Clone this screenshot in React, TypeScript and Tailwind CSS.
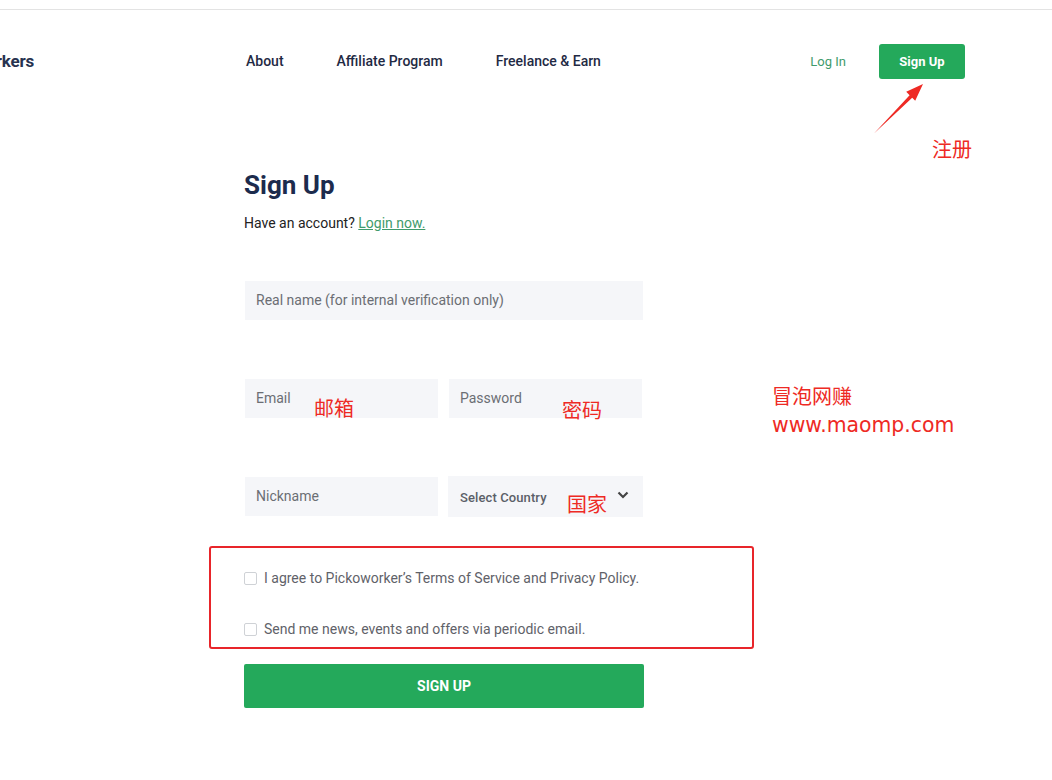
import React from "react";

const cjk = "font-['Noto_Sans_CJK_SC',sans-serif]";

export default function App() {
  return (
    <div className="relative w-[1052px] h-[780px] bg-white overflow-hidden font-['Roboto',sans-serif]">
      <div className="h-[9px]" />
      <div className="border-t border-[#e3e3e3]" />

      {/* Header */}
      <div className="mt-[34px] h-[35px] flex items-center">
        <div className="w-[34px] overflow-hidden flex justify-end shrink-0">
          <span className="whitespace-nowrap text-[17px] font-bold text-[#27324f] tracking-[-0.2px]">Pickoworkers</span>
        </div>
        <nav className="ml-[212px] flex items-center gap-[53px] text-[14px] font-medium text-[#1f2a44]">
          <span>About</span>
          <span>Affiliate Program</span>
          <span>Freelance &amp; Earn</span>
        </nav>
        <div className="ml-auto mr-[87px] flex items-center gap-[33px]">
          <span className="text-[13px] text-[#3f9b6c]">Log In</span>
          <button className="w-[86px] h-[35px] rounded-[3px] bg-[#24a95b] text-white text-[13px] font-bold">Sign Up</button>
        </div>
      </div>

      {/* Form */}
      <main className="ml-[244px] w-[400px]">
        <h1 className="mt-[91px] text-[26px] leading-[30px] font-bold text-[#1c2b4d]">Sign Up</h1>
        <p className="mt-[13px] text-[14px] leading-[20px] text-[#222]">
          Have an account? <span className="text-[#3f9b6c] underline">Login now.</span>
        </p>

        <div className="mt-[48px] ml-[1px] w-[398px] h-[39px] bg-[#f5f6f9] flex items-center px-[11px] text-[14px] text-[#6b6e74]">
          Real name (for internal verification only)
        </div>

        <div className="mt-[59px] ml-[1px] flex gap-[11px]">
          <div className="w-[193px] h-[39px] bg-[#f5f6f9] flex items-center px-[11px] text-[14px] text-[#6b6e74]">Email</div>
          <div className="w-[193px] h-[39px] bg-[#f5f6f9] flex items-center px-[11px] text-[14px] text-[#6b6e74]">Password</div>
        </div>

        <div className="mt-[58px] ml-[1px] flex items-center gap-[10px]">
          <div className="w-[193px] h-[39px] bg-[#f5f6f9] flex items-center px-[11px] text-[14px] text-[#6b6e74]">Nickname</div>
          <div className="w-[195px] h-[41px] bg-[#f5f6f9] flex items-center justify-between pl-[12px] pr-[14px] text-[13px] font-medium text-[#5b5f68]">
            <span className="mt-[3px] tracking-[0.1px]">Select Country</span>
            <svg width="12" height="8" viewBox="0 0 12 8" className="-mt-[4px]">
              <path d="M1.5 1.5 L6 6 L10.5 1.5" fill="none" stroke="#444" strokeWidth="2.2" />
            </svg>
          </div>
        </div>

        <label className="mt-[51px] flex items-center gap-[7px] text-[14px] leading-[20px] text-[#5f6269]">
          <span className="w-[13px] h-[13px] border border-[#cfd2d6] rounded-[2px] bg-white" />
          I agree to Pickoworker’s Terms of Service and Privacy Policy.
        </label>
        <label className="mt-[31px] flex items-center gap-[7px] text-[14px] leading-[20px] text-[#5f6269]">
          <span className="w-[13px] h-[13px] border border-[#cfd2d6] rounded-[2px] bg-white" />
          Send me news, events and offers via periodic email.
        </label>

        <button className="mt-[25px] w-[400px] h-[44px] rounded-[2px] bg-[#24a95b] text-white text-[14px] font-bold">SIGN UP</button>
      </main>

      {/* Annotations */}
      <div className="absolute left-[209px] top-[546px] w-[545px] h-[103px] border-2 border-[#e8252a] rounded-[3px]" />

      <svg className="absolute left-[868px] top-[80px]" width="60" height="60" viewBox="0 0 60 60">
        <polygon points="6,53.5 41.6,15.2 38.2,11.8 55,4 47.2,20.8 44.2,17.8" fill="#ee2a24" />
      </svg>

      <span className={`absolute left-[932px] top-[135px] text-[20px] leading-[28px] text-[#ee2a24] ${cjk}`}>注册</span>
      <span className={`absolute left-[314px] top-[394px] text-[20px] leading-[28px] text-[#ee2a24] ${cjk}`}>邮箱</span>
      <span className={`absolute left-[562px] top-[396px] text-[20px] leading-[28px] text-[#ee2a24] ${cjk}`}>密码</span>
      <span className={`absolute left-[567px] top-[490px] text-[20px] leading-[28px] text-[#ee2a24] ${cjk}`}>国家</span>
      <span className={`absolute left-[772px] top-[382px] text-[20px] leading-[28px] text-[#ee2a24] ${cjk}`}>冒泡网赚</span>
      <span className="absolute left-[772px] top-[411px] text-[20.4px] leading-[28px] text-[#ee2a24] font-['DejaVu_Sans',sans-serif]">www.maomp.com</span>
    </div>
  );
}
